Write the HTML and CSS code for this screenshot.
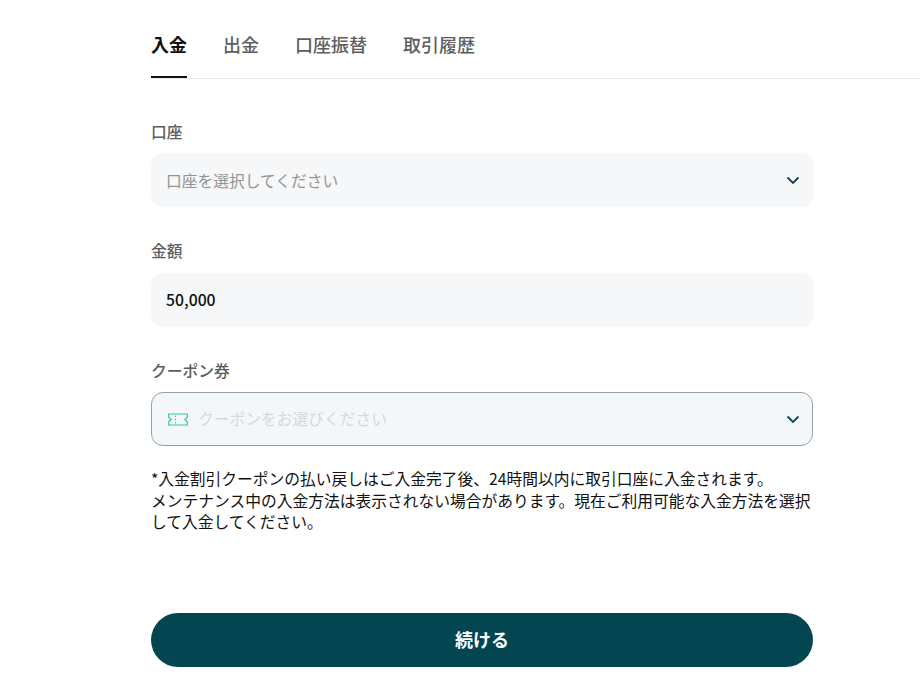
FILE: index.html
```html
<!DOCTYPE html>
<html lang="ja">
<head>
<meta charset="utf-8">
<title>入金</title>
<link rel="stylesheet" href="styles.css">
</head>
<body>
<main class="page">
  <nav class="tabs">
    <a class="tab active">入金</a>
    <a class="tab">出金</a>
    <a class="tab">口座振替</a>
    <a class="tab">取引履歴</a>
  </nav>
  <form class="form">
    <div class="field">
      <div class="label">口座</div>
      <div class="control">
        <span class="placeholder">口座を選択してください</span>
        <svg class="chev" viewBox="0 0 14 9" width="14" height="9"><path d="M1.500 1.500 7 7l5.500-5.500" fill="none" stroke="#0b4650" stroke-width="1.800"/></svg>
      </div>
    </div>
    <div class="field">
      <div class="label">金額</div>
      <div class="control"><span class="value">50,000</span></div>
    </div>
    <div class="field">
      <div class="label">クーポン券</div>
      <div class="control coupon">
        <svg class="ticket" viewBox="0 0 20 13" width="20" height="13"><path d="M.7 1h18.600v3l-2.300 2.500 2.300 2.500v3H.7V9L3 6.500.7 4z" fill="none" stroke="#35c9a0" stroke-width="1.200"/><path d="M7.500 2.500V4M7.500 5.700v1.600M7.500 9v1.500" stroke="#35c9a0" stroke-width="1"/></svg>
        <span class="faint">クーポンをお選びください</span>
        <svg class="chev" viewBox="0 0 14 9" width="14" height="9"><path d="M1.500 1.500 7 7l5.500-5.500" fill="none" stroke="#0b4650" stroke-width="1.800"/></svg>
      </div>
    </div>
    <p class="note">*入金割引クーポンの払い戻しはご入金完了後、24時間以内に取引口座に入金されます。<br>メンテナンス中の入金方法は表示されない場合があります。現在ご利用可能な入金方法を選択して入金してください。</p>
    <button class="submit" type="button">続ける</button>
  </form>
</main>
</body>
</html>
```
FILE: styles.css
```css
* { box-sizing: border-box; }
html, body { margin: 0; padding: 0; background: #fff; }
body {
  font-family: "Noto Sans CJK JP", "Noto Sans", sans-serif;
  color: #111;
  height: 695px;
  overflow: hidden;
}
.page { padding-left: 151px; }
.tabs {
  display: flex;
  gap: 36px;
  height: 79px;
  border-bottom: 1px solid #e8e9eb;
}
.tab {
  height: 78px;
  line-height: 89px;
  font-size: 18px;
  font-weight: 500;
  color: #5d5d5d;
}
.tab.active {
  font-weight: 700;
  color: #111;
  border-bottom: 2px solid #111;
}
.form {
  width: 662px;
  padding-top: 40.500px;
}
.field { margin-bottom: 32px; }
.label {
  font-size: 15.750px;
  font-weight: 500;
  line-height: 23px;
  color: #5d5d5d;
  margin-bottom: 10.500px;
}
.control {
  display: flex;
  align-items: center;
  height: 54px;
  padding: 0 13px 0 15px;
  background: #f5f7f8;
  border-radius: 12px;
  font-size: 15.750px;
}
.placeholder { color: #949494; flex: 1; }
.value { font-weight: 500; color: #111; }
.coupon {
  border: 1px solid #8fa3a6;
  background: #f4f7f9;
  padding: 0 12px 0 16px;
}
.ticket { margin-right: 10px; }
.faint { color: #d4d8da; flex: 1; position: relative; top: -1px; }
.note {
  margin: -10.250px 0 0;
  font-size: 15.750px;
  line-height: 21.750px;
  color: #111;
}
.submit {
  display: block;
  width: 100%;
  height: 54px;
  margin-top: 80px;
  padding: 0 0 2px;
  border: 0;
  border-radius: 27px;
  background: #034652;
  color: #fff;
  font: 700 18px "Noto Sans CJK JP", sans-serif;
}
```
